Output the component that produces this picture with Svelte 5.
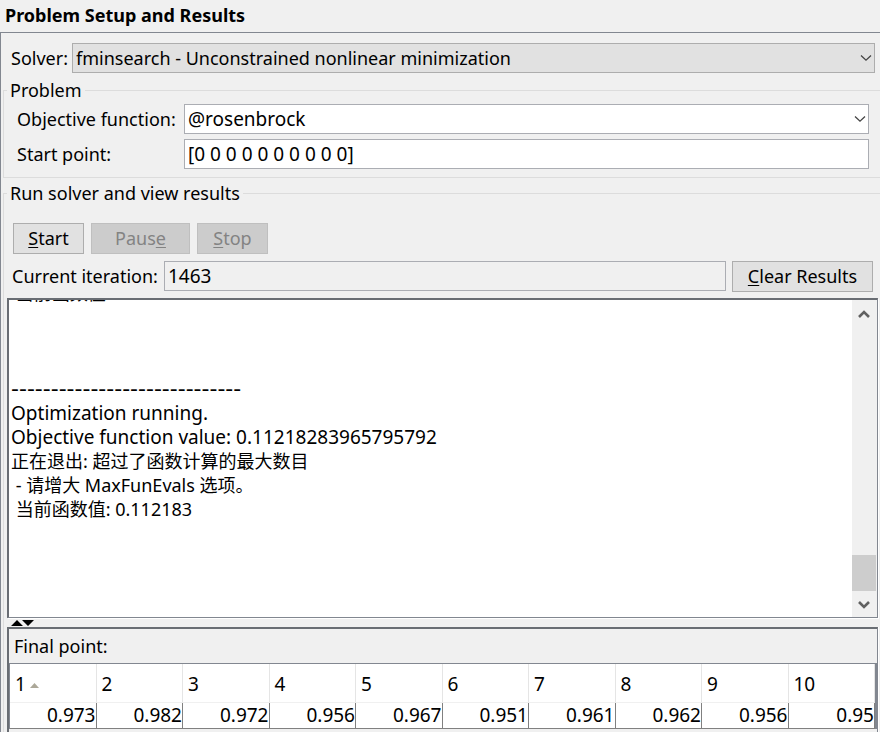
<script>
  import { onMount } from 'svelte';

  let solver = $state('fminsearch');
  let objective = $state('@rosenbrock');
  let startPoint = $state('[0 0 0 0 0 0 0 0 0 0]');
  let iteration = $state('1463');
  let logBox;

  const log = [
    { text: ' 当前函数值:', kind: 'zh' },
    { text: '' },
    { text: '' },
    { text: '' },
    { text: '-----------------------------', kind: 'rule' },
    { text: 'Optimization running.' },
    { text: 'Objective function value: 0.11218283965795792' },
    { text: '正在退出: 超过了函数计算的最大数目', kind: 'zh' },
    { text: ' - 请增大 MaxFunEvals 选项。', kind: 'zh' },
    { text: ' 当前函数值: 0.112183', kind: 'zh' },
    { text: '' },
    { text: '' },
    { text: '' },
    { text: '' }
  ];

  const finalPoint = ['0.973', '0.982', '0.972', '0.956', '0.967', '0.951', '0.961', '0.962', '0.956', '0.95'];

  onMount(() => {
    logBox.scrollTop = logBox.scrollHeight;
  });
</script>

{#snippet chevron()}
  <svg class="chevron" width="12" height="8" viewBox="0 0 12 8" aria-hidden="true">
    <path d="M1 1.5 6 6.2 11 1.5" fill="none" stroke="#444" stroke-width="1.3" />
  </svg>
{/snippet}

<main>
  <h1>Problem Setup and Results</h1>

  <section class="panel">
    <div class="solver">
      <label for="solver">Solver:</label>
      <div class="combo">
        <select id="solver" class="field" bind:value={solver}>
          <option value="fminsearch">fminsearch - Unconstrained nonlinear minimization</option>
        </select>
        {@render chevron()}
      </div>
    </div>

    <fieldset class="problem">
      <legend>Problem</legend>
      <div class="form">
        <label for="objective">Objective function:</label>
        <div class="combo">
          <input id="objective" class="field" type="text" bind:value={objective} />
          {@render chevron()}
        </div>
        <label for="start">Start point:</label>
        <input id="start" class="field" type="text" bind:value={startPoint} />
      </div>
    </fieldset>

    <fieldset class="run">
      <legend>Run solver and view results</legend>
      <div class="buttons">
        <button type="button"><u>S</u>tart</button>
        <button type="button" class="wide" disabled>Paus<u>e</u></button>
        <button type="button" disabled><u>S</u>top</button>
      </div>

      <div class="iteration">
        <label for="iteration">Current iteration:</label>
        <input id="iteration" class="field" type="text" readonly value={iteration} />
        <button type="button"><u>C</u>lear Results</button>
      </div>

      <div class="output">
        <div class="log" role="log" bind:this={logBox}>
          {#each log as line}
            <p class={line.kind}>{line.text}</p>
          {/each}
        </div>
        <div class="scrollbar">
          <button type="button" aria-label="Scroll up">
            <svg width="12" height="10" viewBox="0 0 12 10"><path d="M1 8 6 3 11 8" fill="none" stroke="#606060" stroke-width="2.6" /></svg>
          </button>
          <div class="track"><div class="thumb"></div></div>
          <button type="button" aria-label="Scroll down">
            <svg width="12" height="10" viewBox="0 0 12 10"><path d="M1 2 6 7 11 2" fill="none" stroke="#606060" stroke-width="2.6" /></svg>
          </button>
        </div>
      </div>

      <div class="divider">
        <svg width="24" height="6" viewBox="0 0 24 6" aria-hidden="true">
          <path d="M0 6 6 0 12 6ZM11 0H23L17 6Z" fill="#000" />
        </svg>
      </div>

      <div class="final">
        <h2>Final point:</h2>
        <table>
          <thead>
            <tr>
              {#each finalPoint as _, i}
                <th scope="col">
                  {i + 1}{#if i === 0}<svg width="9" height="5" viewBox="0 0 9 5" aria-hidden="true"><path d="M0 5 4.5 0 9 5Z" fill="#aca899" /></svg>{/if}
                </th>
              {/each}
            </tr>
          </thead>
          <tbody>
            <tr>
              {#each finalPoint as value}
                <td>{value}</td>
              {/each}
            </tr>
          </tbody>
        </table>
      </div>
    </fieldset>
  </section>
</main>

<style>
  :global(body) {
    background: #f0f0f0;
  }

  main {
    display: flex;
    flex-direction: column;
    min-height: 100vh;
    box-sizing: border-box;
    overflow: hidden;
    background: #f0f0f0;
    color: #000;
    font: 18px/24px 'Noto Sans', 'Noto Sans CJK SC', sans-serif;
  }

  h1 {
    margin: 0;
    padding: 3px 5px 5px;
    font-size: 18px;
    line-height: 24px;
    font-weight: 700;
  }

  .panel {
    flex: 1;
    display: flex;
    flex-direction: column;
    border: solid #828790;
    border-width: 1px 0 0 1px;
    padding: 10px 0 0 2px;
  }

  .solver {
    display: flex;
    align-items: center;
    margin: 0 5px 5px 8px;
  }

  .solver label {
    width: 61px;
    white-space: nowrap;
  }

  .combo {
    position: relative;
    flex: 1;
    display: flex;
  }

  .chevron {
    position: absolute;
    right: 3px;
    top: 11px;
    pointer-events: none;
  }

  .field {
    flex: 1;
    min-width: 0;
    height: 30px;
    box-sizing: border-box;
    margin: 0;
    padding: 0 3px;
    border: 1px solid #abadb3;
    border-radius: 0;
    background: #fff;
    color: #000;
    font: inherit;
    font-size: 19px;
    line-height: 24px;
    appearance: none;
    outline: none;
  }

  select.field {
    background: #e1e1e1;
    border-color: #adadad;
    font-size: 18px;
  }

  .field[readonly] {
    background: #f0f0f0;
  }

  fieldset {
    min-width: 0;
    margin: 0;
    padding: 0;
    border: 1px solid #dcdcdc;
    border-right: 0;
  }

  legend {
    margin-left: 3px;
    padding: 0 3px;
    line-height: 24px;
  }

  .form {
    display: grid;
    grid-template-columns: 167px 1fr;
    row-gap: 5px;
    align-items: center;
    padding: 2px 11px 8px 13px;
  }

  .form label {
    white-space: nowrap;
  }

  .run {
    flex: 1;
    margin-top: 3px;
    border-bottom: 0;
  }

  .buttons {
    display: flex;
    gap: 7px;
    padding: 18px 0 7px 9px;
  }

  button {
    height: 31px;
    min-width: 71px;
    box-sizing: border-box;
    margin: 0;
    padding: 0 13px 1px;
    border: 1px solid #adadad;
    background: #e1e1e1;
    color: #000;
    font: inherit;
    line-height: 24px;
    white-space: nowrap;
  }

  button.wide {
    min-width: 99px;
  }

  button:disabled {
    border-color: #bfbfbf;
    background: #ccc;
    color: #838383;
  }

  u {
    text-underline-offset: 2px;
    text-decoration-thickness: 1px;
  }

  .iteration {
    display: flex;
    align-items: flex-start;
    padding: 0 7px 6px 8px;
  }

  .iteration label {
    width: 152px;
    line-height: 30px;
    white-space: nowrap;
  }

  .iteration button {
    width: 141px;
    margin-left: 6px;
  }

  .output {
    display: flex;
    height: 320px;
    box-sizing: border-box;
    margin: 0 2px 0 3px;
    border: solid #828790;
    border-width: 2px 1px 1px 2px;
    border-top-color: #696d73;
    border-left-color: #696d73;
    background: #fff;
    box-shadow: 1px 1px #fff;
  }

  .log {
    flex: 1;
    min-width: 0;
    overflow: hidden;
    padding-left: 2px;
    font-size: 19px;
  }

  .log p {
    height: 24px;
    margin: 0;
    white-space: pre;
  }

  .log .zh {
    font-size: 18px;
  }

  .log .rule {
    font-family: 'DejaVu Sans', sans-serif;
    font-size: 22px;
  }

  .scrollbar {
    display: flex;
    flex-direction: column;
    width: 25px;
    background: #f0f0f0;
  }

  .scrollbar button {
    display: flex;
    align-items: center;
    justify-content: center;
    width: 24px;
    min-width: 0;
    height: 26px;
    padding: 2px 0 0;
    border: 0;
    background: none;
  }

  .track {
    flex: 1;
    display: flex;
    flex-direction: column;
    justify-content: flex-end;
  }

  .thumb {
    width: 24px;
    height: 36px;
    background: #cdcdcd;
  }

  .divider {
    display: flex;
    padding: 2px 0 1px 7px;
  }

  .final {
    margin: 0 2px 0 3px;
    padding-bottom: 3px;
    border: solid #828790;
    border-width: 2px 1px 0 2px;
    border-top-color: #696d73;
    border-left-color: #696d73;
    box-shadow: 1px 0 #fff;
  }

  h2 {
    margin: 0;
    padding: 5px;
    font-size: 18px;
    line-height: 24px;
    font-weight: 400;
  }

  table {
    width: 100%;
    table-layout: fixed;
    border-collapse: separate;
    border-spacing: 0;
    border: solid #828790;
    border-width: 1px 2px 0 1px;
    background: #fff;
    font-size: 19px;
  }

  th {
    height: 36px;
    padding: 2px 0 0 5px;
    border-right: 1px solid #e5e5e5;
    border-bottom: 1px solid #f0f0f0;
    font-weight: 400;
    text-align: left;
  }

  th svg {
    margin-left: 4px;
    vertical-align: 3px;
  }

  td {
    height: 25px;
    padding: 0;
    border-right: 1px solid #808080;
    border-bottom: 1px solid #808080;
    text-align: right;
    vertical-align: top;
  }
</style>
